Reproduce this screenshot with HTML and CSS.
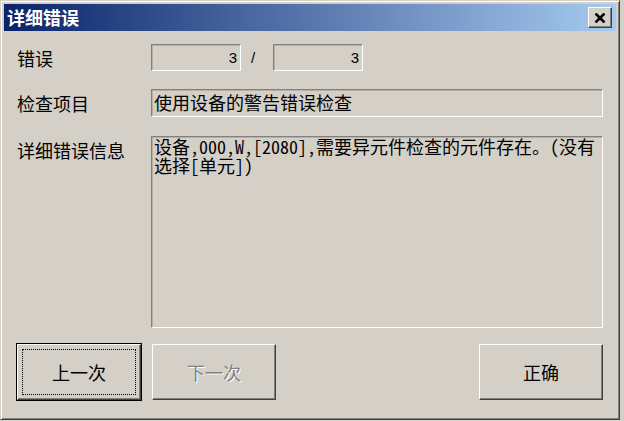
FILE: index.html
```html
<!DOCTYPE html>
<html lang="zh-CN">
<head>
  <meta charset="UTF-8">
  <title>详细错误</title>
  <link rel="stylesheet" href="styles.css">
</head>
<body>
  <div class="window">
    <div class="titlebar">
      <span class="title">详细错误</span>
      <button class="close-btn" aria-label="关闭">
        <svg width="12" height="10" viewBox="0 0 12 10">
          <path d="M1.5 0.5 L10.5 9.5 M10.5 0.5 L1.5 9.5" stroke="#000" stroke-width="2.6" fill="none"/>
        </svg>
      </button>
    </div>

    <div class="content">
      <div class="form">
        <div class="label">错误</div>
        <div class="count-row">
          <div class="field num">3</div>
          <span class="slash">/</span>
          <div class="field num">3</div>
        </div>

        <div class="label">检查项目</div>
        <div class="field text">使用设备的警告错误检查</div>

        <div class="label top">详细错误信息</div>
        <div class="field memo">
          <div class="memo-line">设备,000,W,[2080],需要异元件检查的元件存在。(没有</div>
          <div class="memo-line">选择[单元])</div>
        </div>
      </div>

      <div class="buttons">
        <button class="btn default"><span class="focus">上一次</span></button>
        <button class="btn" disabled>下一次</button>
        <button class="btn ok">正确</button>
      </div>
    </div>
  </div>
</body>
</html>
```

FILE: styles.css
```css
body {
  margin: 0;
  background: #d4d0c8;
  font-family: "Noto Sans CJK SC", sans-serif;
  color: #000;
}

.window {
  width: 620px;
  height: 420px;
  box-sizing: border-box;
  padding: 3px;
  background: #d4d0c8;
  border: 1px solid;
  border-color: #d4d0c8 #404040 #404040 #d4d0c8;
  box-shadow: inset 1px 1px 0 #fff, inset -1px -1px 0 #808080;
}

.titlebar {
  height: 27px;
  display: flex;
  align-items: center;
  justify-content: space-between;
  padding: 0 4px 0 3px;
  background: linear-gradient(to right, #0a246a, #a6caf0);
}

.title {
  color: #fff;
  font-weight: bold;
  font-size: 18px;
  line-height: 27px;
}

.close-btn {
  width: 24px;
  height: 21px;
  padding: 0;
  display: flex;
  align-items: center;
  justify-content: center;
  background: #d4d0c8;
  border: 1px solid;
  border-color: #fff #404040 #404040 #fff;
  box-shadow: inset -1px -1px 0 #808080;
}

.content {
  padding: 13px 13px 0 13px;
}

.form {
  display: grid;
  grid-template-columns: 134px 1fr;
  grid-template-rows: 27px 28px 193px;
  row-gap: 18px;
}

.label {
  font-size: 18px;
  align-self: center;
  line-height: 24px;
}
.label.top {
  align-self: start;
  padding-top: 3px;
}

.count-row {
  display: flex;
  align-items: center;
}

.field {
  box-sizing: border-box;
  background: #d4d0c8;
  border: 1px solid;
  border-color: #808080 #fff #fff #808080;
  box-shadow: inset 1px 1px 0 #b4b0a8;
}

.num {
  width: 90px;
  height: 27px;
  padding-right: 3px;
  text-align: right;
  font-family: "Liberation Sans", sans-serif;
  font-size: 15px;
  line-height: 25px;
}

.slash {
  width: 32px;
  padding-left: 10px;
  box-sizing: border-box;
  font-family: "Liberation Sans", sans-serif;
  font-size: 15px;
}

.text {
  padding: 0 2px;
  font-size: 18px;
  line-height: 25px;
}

.memo {
  margin-top: 1px;
  padding: 0 2px;
  font-size: 18px;
  font-feature-settings: "hwid" 1;
}

.memo-line {
  height: 19px;
  line-height: 19px;
  white-space: nowrap;
}

.buttons {
  display: flex;
  gap: 11px;
  margin-top: 16px;
}

.btn {
  width: 124px;
  height: 56px;
  padding: 4px;
  font-family: "Noto Sans CJK SC", sans-serif;
  font-size: 18px;
  color: #000;
  background: #d4d0c8;
  border: 1px solid;
  border-color: #fff #404040 #404040 #fff;
  box-shadow: inset -1px -1px 0 #808080;
}

.btn.default {
  outline: 1px solid #000;
}

.btn .focus {
  display: flex;
  align-items: center;
  justify-content: center;
  height: 100%;
  box-sizing: border-box;
  border: 1px dotted #000;
}

.btn:disabled {
  color: #808080;
  text-shadow: 1px 1px 0 #fff;
}

.btn.ok {
  margin-left: auto;
}
```
